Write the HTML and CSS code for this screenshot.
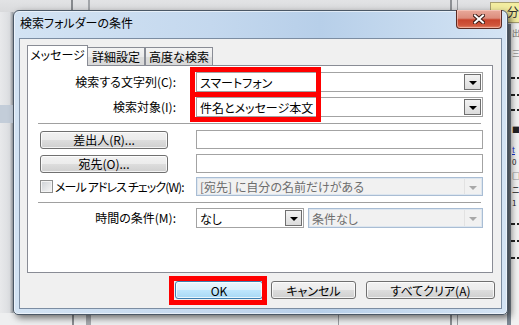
FILE: index.html
```html
<!DOCTYPE html>
<html lang="ja">
<head>
<meta charset="utf-8">
<title>検索フォルダーの条件</title>
<link rel="stylesheet" href="styles.css">
</head>
<body>
<div class="desktop">
  <div class="bg-left"><div class="bg-left-sel"></div></div>
  <div class="bg-top"></div>
  <div class="bg-bottom"></div>
  <div class="bg-tag">分類</div>
  <div class="bg-right">
    <div class="frag f1">出</div>
    <div class="frag f2">三</div>
    <div class="dash d1"></div>
    <div class="dash d2"></div>
    <div class="dash d3"></div>
    <div class="frag f3">■</div>
    <div class="frag f4 link">t</div>
    <div class="frag f5">0</div>
    <div class="frag f6">□</div>
    <div class="frag f7">ニ</div>
    <div class="frag f8">1</div>
    <div class="dash d4"></div>
    <div class="dash d5"></div>
    <div class="dash d6"></div>
  </div>

  <div class="dialog">
    <div class="titlebar">
      <span class="title">検索フォルダーの条件</span>
      <div class="close">
        <svg width="12" height="10" viewBox="0 0 12 10">
          <path d="M2 1.5 L10 8.5 M10 1.5 L2 8.5" stroke="#3a1a14" stroke-width="4" stroke-linecap="square"/>
          <path d="M2 1.5 L10 8.5 M10 1.5 L2 8.5" stroke="#ffffff" stroke-width="2" stroke-linecap="square"/>
        </svg>
      </div>
    </div>
    <div class="client">
      <div class="tabs">
        <div class="tab active">メッセージ</div>
        <div class="tab t2">詳細設定</div>
        <div class="tab t3">高度な検索</div>
      </div>
      <div class="panel">
        <div class="row r1">
          <div class="lbl">検索する文字列(C):</div>
          <div class="combo"><span class="val">スマートフォン</span><span class="ddbtn"></span></div>
        </div>
        <div class="row r2">
          <div class="lbl">検索対象(I):</div>
          <div class="combo"><span class="val">件名とメッセージ本文</span><span class="ddbtn"></span></div>
        </div>
        <div class="sep s1"></div>
        <div class="row r3">
          <div class="lblcell"><div class="btn wide">差出人(R)...</div></div>
          <div class="field"></div>
        </div>
        <div class="row r4">
          <div class="lblcell"><div class="btn wide">宛先(O)...</div></div>
          <div class="field"></div>
        </div>
        <div class="row r5">
          <div class="lblcell"><span class="check"></span><span class="chklbl">メール アドレス チェック(W):</span></div>
          <div class="combo disabled"><span class="val">[宛先] に自分の名前だけがある</span><span class="ddbtn dis"></span></div>
        </div>
        <div class="sep s2"></div>
        <div class="row r6">
          <div class="lbl">時間の条件(M):</div>
          <div class="combo small"><span class="val">なし</span><span class="ddbtn"></span></div>
          <div class="combo disabled rest"><span class="val">条件なし</span><span class="ddbtn dis"></span></div>
        </div>
      </div>
      <div class="buttons">
        <div class="btn default ok">OK</div>
        <div class="btn cancel">キャンセル</div>
        <div class="btn clear">すべてクリア(A)</div>
      </div>
    </div>
  </div>

  <div class="mark m1"></div>
  <div class="mark m2"></div>
  <div class="mark m3"></div>
</div>
</body>
</html>
```

FILE: styles.css
```css
* { box-sizing: border-box; }
html, body { margin: 0; padding: 0; }
body {
  width: 519px;
  height: 325px;
  overflow: hidden;
  font-family: "Noto Sans CJK JP", "Noto Sans", sans-serif;
  font-size: 12px;
  line-height: 1;
  color: #000;
  font-feature-settings: "palt";
  background: #e4e5e7;
}
.desktop { position: relative; width: 519px; height: 325px; overflow: hidden; }

/* background windows */
.bg-left {
  position: absolute; left: 0; top: 0; width: 16px; height: 325px;
  background: linear-gradient(to right, #e8e9eb 0, #dcdee1 60%, #a5a9ae 78%, #e2e6ea 100%);
}
.bg-left-sel { margin-top: 105px; height: 18px; background: #c3cdd9; }
.bg-top {
  position: absolute; left: 0; top: 0; width: 519px; height: 12px;
  background:
    linear-gradient(to right, transparent 71px, #86898d 71px, #86898d 73px, transparent 73px,
      transparent 88px, #a2a5a9 88px, #a2a5a9 90px, transparent 90px,
      transparent 450px, #8d9094 450px, #8d9094 452px, transparent 452px,
      transparent 457px, #9a9da1 457px, #9a9da1 458px, transparent 458px),
    linear-gradient(#e2e3e5, #d9dadc);
}
.bg-bottom {
  position: absolute; left: 0; top: 313px; width: 519px; height: 12px;
  background:
    linear-gradient(to right, transparent 72px, #8a8d91 72px, #8a8d91 74px, transparent 74px,
      transparent 86px, #a7aaae 86px, #a7aaae 91px, transparent 91px,
      transparent 338px, #9a9da1 338px, #9a9da1 339px, transparent 339px,
      transparent 450px, #8d9094 450px, #8d9094 452px, transparent 452px,
      transparent 457px, #9a9da1 457px, #9a9da1 458px, transparent 458px),
    #eeeff0;
}
.bg-tag {
  position: absolute; left: 490px; top: 2px; width: 29px; height: 21px;
  background: #f3eda0; border: 1px solid #a8a070; border-right: none;
  padding: 3px 0 0 16px; font-size: 12px; color: #333; overflow: hidden; white-space: nowrap;
}
.bg-right {
  position: absolute; left: 507px; top: 24px; width: 12px; height: 301px;
  background: #f2f2f2;
  border-left: 4px solid #7e8a96;
  overflow: hidden;
  display: flex; flex-direction: column;
  font-size: 8px; line-height: 10px; color: #222;
}
.frag { white-space: nowrap; height: 10px; padding-left: 1px; overflow: hidden; }
.f1 { margin-top: 4px; color: #666; }
.f2 { margin-top: 10px; color: #666; }
.dash { height: 2px; flex: none; background: repeating-linear-gradient(to right, #222 0 4px, transparent 4px 6px); }
.d1 { margin-top: 19px; }
.d2 { margin-top: 15px; }
.d3 { margin-top: 13px; }
.f3 { margin-top: 14px; }
.f4 { margin-top: 10px; }
.link { color: #1030d0; text-decoration: underline; }
.f5 { margin-top: 2px; }
.f6 { margin-top: 4px; }
.f7 { margin-top: 4px; }
.f8 { margin-top: 3px; }
.d4 { margin-top: 15px; }
.d5 { margin-top: 15px; }
.d6 { margin-top: 15px; }

/* dialog window */
.dialog {
  position: absolute; left: 13px; top: 10px; width: 495px; height: 305px;
  border: 1px solid #4b5866;
  border-radius: 6px 6px 5px 5px;
  background: linear-gradient(to right, #d3e3f3 0%, #c4d8ee 40%, #b7cfe9 62%, #d4e4f4 100%);
  box-shadow: inset 0 0 0 1px rgba(255,255,255,0.55), 3px 3px 7px rgba(0,0,0,0.55);
  padding: 0 5px 5px 5px;
  display: flex; flex-direction: column;
  z-index: 3;
}
.titlebar { height: 27px; display: flex; align-items: flex-start; }
.title { padding: 6px 0 0 1px; font-size: 12px; color: #000; white-space: nowrap; }
.close {
  margin-left: auto; margin-right: 0; margin-top: -1px;
  width: 46px; height: 19px;
  border: 1px solid #5a2a22;
  border-top: none;
  border-radius: 0 0 4px 4px;
  background: linear-gradient(#e9a99b 0%, #dc8d7d 45%, #c8442c 55%, #d0563c 85%, #e48a6e 100%);
  box-shadow: inset 0 0 0 1px rgba(255,220,210,0.5);
  display: flex; align-items: center; justify-content: center;
}
.client {
  flex: 1;
  border: 1px solid #7c8da2;
  background: #f0f0f0;
  padding-top: 6px;
  display: flex; flex-direction: column;
}

/* tabs */
.tabs { display: flex; align-items: flex-end; height: 21px; margin-left: 7px; position: relative; z-index: 2; }
.tab {
  height: 18px; margin-bottom: 1px;
  border: 1px solid #898c95; border-bottom: none;
  background: linear-gradient(#f4f4f4 0%, #ebebeb 50%, #dedede 51%, #d8d8d8 100%);
  display: flex; align-items: center; justify-content: center;
  padding-top: 1px;
  white-space: nowrap;
}
.tab.active { height: 21px; margin-bottom: 0; width: 61px; background: #fff; padding-bottom: 3px; }
.tab.t2 { width: 57px; border-left: none; }
.tab.t3 { width: 68px; border-left: 1px solid #898c95; }

.panel {
  margin: -1px 8px 0 7px;
  height: 208px;
  border: 1px solid #898c95;
  background: #fff;
  padding: 6px 9px 0 10px;
  display: flex; flex-direction: column;
  position: relative; z-index: 1;
}
.row { display: flex; align-items: center; gap: 0; }
.lbl { flex: none; width: 138px; margin-right: 20px; text-align: right; white-space: nowrap; }
.lblcell { flex: none; width: 138px; margin-right: 20px; display: flex; align-items: center; white-space: nowrap; }
.r1 { height: 20px; }
.r2 { height: 20px; margin-top: 5px; }
.s1 { margin-top: 6px; }
.r3 { height: 19px; margin-top: 6px; }
.r4 { height: 19px; margin-top: 5px; }
.r5 { height: 19px; margin-top: 4px; }
.s2 { margin-top: 6px; }
.r6 { height: 20px; margin-top: 5px; }
.sep { height: 1px; background: #a0a0a0; margin-right: 2px; }

.combo {
  flex: 1; height: 100%;
  border: 1px solid #a3a3a3;
  background: #fff;
  display: flex; align-items: center;
  padding-left: 3px;
  white-space: nowrap;
}
.combo .val { flex: 1; padding-top: 1px; }
.ddbtn {
  flex: none;
  width: 17px; height: calc(100% - 2px); margin-right: 1px;
  border: 1px solid #6f6f6f;
  background: linear-gradient(#f3f3f3, #dcdcdc);
  display: flex; align-items: center; justify-content: center;
}
.ddbtn::after {
  content: ""; width: 0; height: 0;
  border-left: 4px solid transparent; border-right: 4px solid transparent;
  border-top: 4px solid #000;
  margin-top: 2px;
}
.combo.disabled {
  border-color: #a9bdd4;
  box-shadow: inset 0 0 0 1px #dde6ef;
  background: #f1f1f1;
  color: #6d6d6d;
}
.ddbtn.dis { border: none; background: none; border-left: 1px solid #e2e2e2; }
.ddbtn.dis::after { border-top-color: #a8a8a8; }
.combo.small { flex: 0 0 108px; }
.combo.rest { margin-left: 4px; }

.field { flex: 1; height: 100%; border: 1px solid #a3a3a3; background: #fff; }

.btn {
  border: 1px solid #707070;
  border-radius: 3px;
  background: linear-gradient(#f2f2f2 0%, #ebebeb 50%, #dddddd 51%, #cfcfcf 100%);
  box-shadow: inset 0 0 0 1px rgba(255,255,255,0.75);
  display: flex; align-items: center; justify-content: center;
  white-space: nowrap;
  padding-top: 1px;
}
.btn.wide { width: 128px; height: 18px; margin-left: 2px; }
.check {
  flex: none;
  width: 13px; height: 13px; margin-left: 2px; margin-right: 2px;
  border: 1px solid #8e8f8f;
  background: linear-gradient(135deg, #cdd1d6, #f7f7f7);
  box-shadow: inset 0 0 0 1px #f4f4f4;
}
.chklbl { letter-spacing: -0.9px; }

.buttons {
  margin-top: 8px;
  height: 18px;
  display: flex; justify-content: flex-end;
  padding-right: 6px;
}
.buttons .btn { height: 18px; }
.ok { width: 88px; }
.cancel { width: 85px; margin-left: 8px; }
.clear { width: 129px; margin-left: 10px; }
.btn.default {
  border-color: #3c7fb1;
  background: linear-gradient(#eaf6fd 0%, #d9f0fc 50%, #bee6fd 51%, #a7d9f5 100%);
}

/* red annotation boxes */
.mark { position: absolute; border: 5px solid #ff0000; z-index: 5; }
.m1 { left: 190px; top: 67px; width: 131px; height: 30px; }
.m2 { left: 190px; top: 92px; width: 131px; height: 30px; }
.m3 { left: 169px; top: 276px; width: 98px; height: 29px; }
```
